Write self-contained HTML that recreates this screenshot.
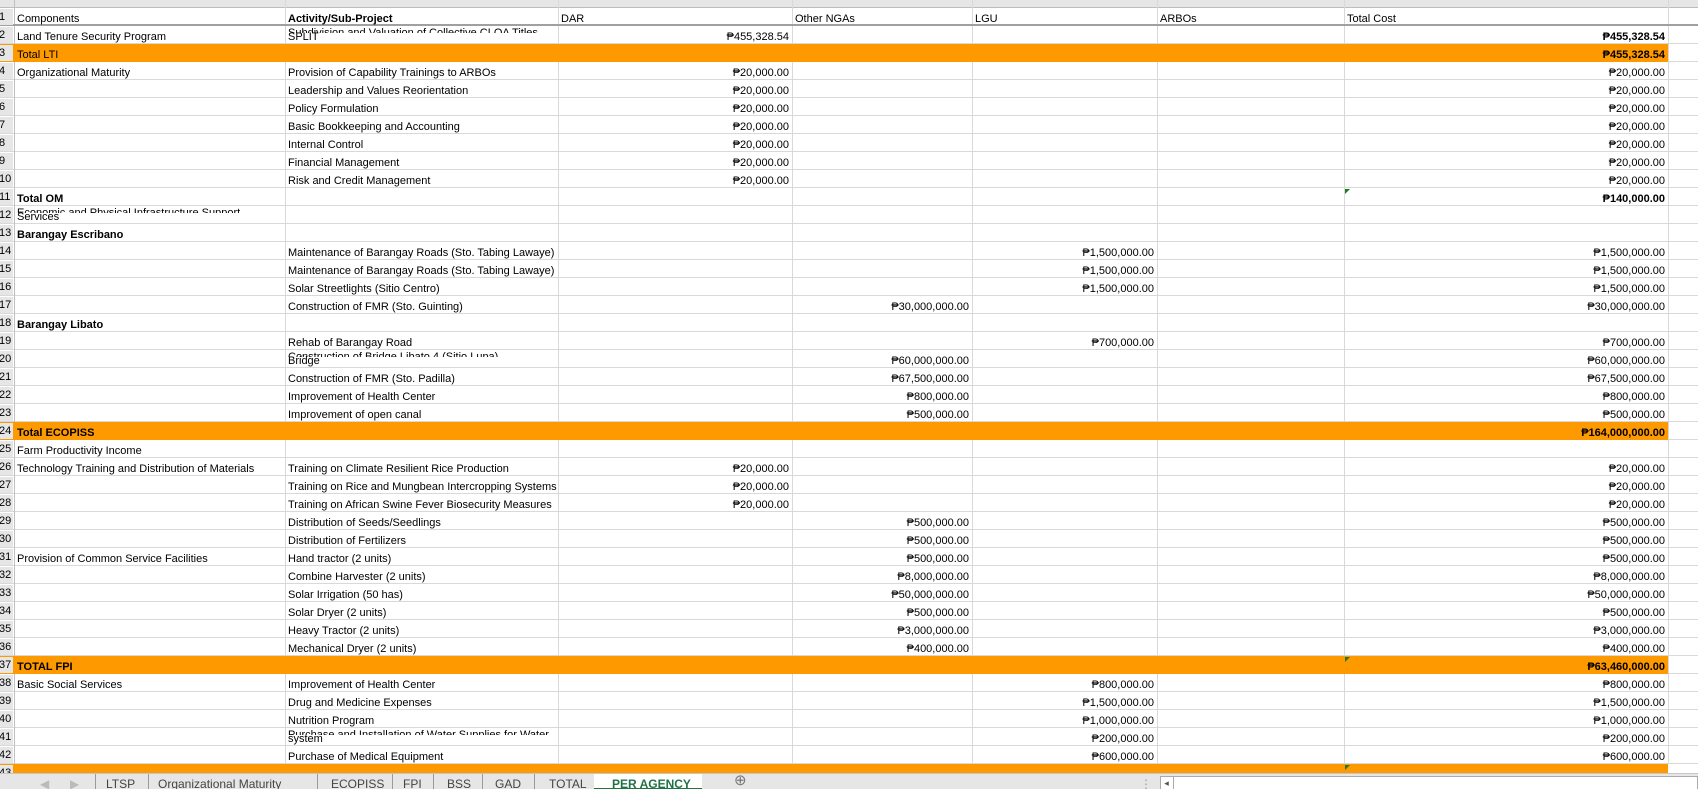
<!DOCTYPE html>
<html><head><meta charset="utf-8"><style>
*{margin:0;padding:0;box-sizing:border-box}
body{width:1698px;height:789px;overflow:hidden;background:#fff;font-family:"Liberation Sans",Arial,sans-serif;font-size:11px;color:#000;position:relative}
#grid{position:absolute;left:0;top:8px;width:1698px;height:756px;background:repeating-linear-gradient(to bottom,transparent 0,transparent 17px,#d9d9d9 17px,#d9d9d9 18px)}
.v{position:absolute;top:0;width:1px;height:764px;background:#d9d9d9}
.hdr{position:absolute;left:0;top:0;width:1698px;height:8px;background:#e6e6e6;border-bottom:1px solid #bdbdbd}
.r{position:absolute;left:0;width:1698px;height:18px;line-height:18px;white-space:nowrap}
.r>div{position:absolute;top:2px;overflow:visible}
.n{left:-1px;width:14px;background:#e6e6e6;overflow:hidden!important;height:16px;top:1px!important;line-height:17px}
.o{background:#ff9900;width:1668px}
.o .n{background:#e6e6e6}
.a{left:17px}.b{left:288px}
.c{left:558px;width:231px;text-align:right}
.d{left:792px;width:177px;text-align:right}
.e{left:972px;width:182px;text-align:right}
.g{left:1344px;width:321px;text-align:right}
.ch{left:561px}.dh{left:795px}.eh{left:975px}.fh{left:1160px}.gh{left:1347px}
.bo{font-weight:bold}
.clip{position:absolute;height:6px;overflow:hidden;line-height:12px;font-size:11px}
#tabs{position:absolute;left:0;top:773px;width:1698px;height:16px;background:#e6e6e6;border-top:1px solid #c6c6c6;overflow:hidden;font-size:12px;color:#444}
#tabs span{position:absolute;top:2px;line-height:16px}
#tabs i{position:absolute;top:0;width:1px;height:16px;background:#9a9a9a}
.tri{position:absolute;width:0;height:0;border-top:5px solid #1e7b1e;border-right:5px solid transparent}
</style></head><body>
<div class="hdr"></div>
<div id="grid"></div>
<div class="v" style="left:14px;background:#c0c0c0"></div>
<div class="v" style="left:285px"></div>
<div class="v" style="left:558px"></div>
<div class="v" style="left:792px"></div>
<div class="v" style="left:972px"></div>
<div class="v" style="left:1157px"></div>
<div class="v" style="left:1344px"></div>
<div class="v" style="left:1668px"></div>

<div class="r" style="top:8px;border-bottom:2px solid #a0a0a0"><div class="n">1</div><div class="a">Components</div><div class="b bo">Activity/Sub-Project</div><div class="ch">DAR</div><div class="dh">Other NGAs</div><div class="eh">LGU</div><div class="fh">ARBOs</div><div class="gh">Total Cost</div></div>
<div class="clip" style="left:288px;top:27px">Subdivision and Valuation of Collective CLOA Titles</div>
<div class="r" style="top:26px"><div class="n">2</div><div class="a">Land Tenure Security Program</div><div class="b">SPLIT</div><div class="c">₱455,328.54</div><div class="g bo">₱455,328.54</div></div>
<div class="r o" style="top:44px"><div class="n">3</div><div class="a">Total LTI</div><div class="g bo">₱455,328.54</div></div>
<div class="r" style="top:62px"><div class="n">4</div><div class="a">Organizational Maturity</div><div class="b">Provision of Capability Trainings to ARBOs</div><div class="c">₱20,000.00</div><div class="g">₱20,000.00</div></div>
<div class="r" style="top:80px"><div class="n">5</div><div class="b">Leadership and Values Reorientation</div><div class="c">₱20,000.00</div><div class="g">₱20,000.00</div></div>
<div class="r" style="top:98px"><div class="n">6</div><div class="b">Policy Formulation</div><div class="c">₱20,000.00</div><div class="g">₱20,000.00</div></div>
<div class="r" style="top:116px"><div class="n">7</div><div class="b">Basic Bookkeeping and Accounting</div><div class="c">₱20,000.00</div><div class="g">₱20,000.00</div></div>
<div class="r" style="top:134px"><div class="n">8</div><div class="b">Internal Control</div><div class="c">₱20,000.00</div><div class="g">₱20,000.00</div></div>
<div class="r" style="top:152px"><div class="n">9</div><div class="b">Financial Management</div><div class="c">₱20,000.00</div><div class="g">₱20,000.00</div></div>
<div class="r" style="top:170px"><div class="n">10</div><div class="b">Risk and Credit Management</div><div class="c">₱20,000.00</div><div class="g">₱20,000.00</div></div>
<div class="r" style="top:188px"><div class="n">11</div><div class="a bo">Total OM</div><div class="g bo">₱140,000.00</div></div>
<div class="clip" style="left:17px;top:207px">Economic and Physical Infrastructure Support</div>
<div class="r" style="top:206px"><div class="n">12</div><div class="a">Services</div></div>
<div class="r" style="top:224px"><div class="n">13</div><div class="a bo">Barangay Escribano</div></div>
<div class="r" style="top:242px"><div class="n">14</div><div class="b">Maintenance of Barangay Roads (Sto. Tabing Lawaye)</div><div class="e">₱1,500,000.00</div><div class="g">₱1,500,000.00</div></div>
<div class="r" style="top:260px"><div class="n">15</div><div class="b">Maintenance of Barangay Roads (Sto. Tabing Lawaye)</div><div class="e">₱1,500,000.00</div><div class="g">₱1,500,000.00</div></div>
<div class="r" style="top:278px"><div class="n">16</div><div class="b">Solar Streetlights (Sitio Centro)</div><div class="e">₱1,500,000.00</div><div class="g">₱1,500,000.00</div></div>
<div class="r" style="top:296px"><div class="n">17</div><div class="b">Construction of FMR (Sto. Guinting)</div><div class="d">₱30,000,000.00</div><div class="g">₱30,000,000.00</div></div>
<div class="r" style="top:314px"><div class="n">18</div><div class="a bo">Barangay Libato</div></div>
<div class="r" style="top:332px"><div class="n">19</div><div class="b">Rehab of Barangay Road</div><div class="e">₱700,000.00</div><div class="g">₱700,000.00</div></div>
<div class="clip" style="left:288px;top:351px">Construction of Bridge Libato 4 (Sitio Lupa)</div>
<div class="r" style="top:350px"><div class="n">20</div><div class="b">Bridge</div><div class="d">₱60,000,000.00</div><div class="g">₱60,000,000.00</div></div>
<div class="r" style="top:368px"><div class="n">21</div><div class="b">Construction of FMR (Sto. Padilla)</div><div class="d">₱67,500,000.00</div><div class="g">₱67,500,000.00</div></div>
<div class="r" style="top:386px"><div class="n">22</div><div class="b">Improvement of Health Center</div><div class="d">₱800,000.00</div><div class="g">₱800,000.00</div></div>
<div class="r" style="top:404px"><div class="n">23</div><div class="b">Improvement of open canal</div><div class="d">₱500,000.00</div><div class="g">₱500,000.00</div></div>
<div class="r o" style="top:422px"><div class="n">24</div><div class="a bo">Total ECOPISS</div><div class="g bo">₱164,000,000.00</div></div>
<div class="r" style="top:440px"><div class="n">25</div><div class="a">Farm Productivity Income</div></div>
<div class="r" style="top:458px"><div class="n">26</div><div class="a">Technology Training and Distribution of Materials</div><div class="b">Training on Climate Resilient Rice Production</div><div class="c">₱20,000.00</div><div class="g">₱20,000.00</div></div>
<div class="r" style="top:476px"><div class="n">27</div><div class="b">Training on Rice and Mungbean Intercropping Systems</div><div class="c">₱20,000.00</div><div class="g">₱20,000.00</div></div>
<div class="r" style="top:494px"><div class="n">28</div><div class="b">Training on African Swine Fever Biosecurity Measures</div><div class="c">₱20,000.00</div><div class="g">₱20,000.00</div></div>
<div class="r" style="top:512px"><div class="n">29</div><div class="b">Distribution of Seeds/Seedlings</div><div class="d">₱500,000.00</div><div class="g">₱500,000.00</div></div>
<div class="r" style="top:530px"><div class="n">30</div><div class="b">Distribution of Fertilizers</div><div class="d">₱500,000.00</div><div class="g">₱500,000.00</div></div>
<div class="r" style="top:548px"><div class="n">31</div><div class="a">Provision of Common Service Facilities</div><div class="b">Hand tractor (2 units)</div><div class="d">₱500,000.00</div><div class="g">₱500,000.00</div></div>
<div class="r" style="top:566px"><div class="n">32</div><div class="b">Combine Harvester (2 units)</div><div class="d">₱8,000,000.00</div><div class="g">₱8,000,000.00</div></div>
<div class="r" style="top:584px"><div class="n">33</div><div class="b">Solar Irrigation (50 has)</div><div class="d">₱50,000,000.00</div><div class="g">₱50,000,000.00</div></div>
<div class="r" style="top:602px"><div class="n">34</div><div class="b">Solar Dryer (2 units)</div><div class="d">₱500,000.00</div><div class="g">₱500,000.00</div></div>
<div class="r" style="top:620px"><div class="n">35</div><div class="b">Heavy Tractor (2 units)</div><div class="d">₱3,000,000.00</div><div class="g">₱3,000,000.00</div></div>
<div class="r" style="top:638px"><div class="n">36</div><div class="b">Mechanical Dryer (2 units)</div><div class="d">₱400,000.00</div><div class="g">₱400,000.00</div></div>
<div class="r o" style="top:656px"><div class="n">37</div><div class="a bo">TOTAL FPI</div><div class="g bo">₱63,460,000.00</div></div>
<div class="r" style="top:674px"><div class="n">38</div><div class="a">Basic Social Services</div><div class="b">Improvement of Health Center</div><div class="e">₱800,000.00</div><div class="g">₱800,000.00</div></div>
<div class="r" style="top:692px"><div class="n">39</div><div class="b">Drug and Medicine Expenses</div><div class="e">₱1,500,000.00</div><div class="g">₱1,500,000.00</div></div>
<div class="r" style="top:710px"><div class="n">40</div><div class="b">Nutrition Program</div><div class="e">₱1,000,000.00</div><div class="g">₱1,000,000.00</div></div>
<div class="clip" style="left:288px;top:729px">Purchase and Installation of Water Supplies for Water</div>
<div class="r" style="top:728px"><div class="n">41</div><div class="b">system</div><div class="e">₱200,000.00</div><div class="g">₱200,000.00</div></div>
<div class="r" style="top:746px"><div class="n">42</div><div class="b">Purchase of Medical Equipment</div><div class="e">₱600,000.00</div><div class="g">₱600,000.00</div></div>
<div class="r o" style="top:764px"><div class="n">43</div></div>
<div class="tri" style="left:1345px;top:189px"></div>
<div class="tri" style="left:1345px;top:657px"></div>
<div class="tri" style="left:1345px;top:765px"></div>

<div id="tabs">
<span style="left:40px;color:#bbb">◀</span><span style="left:70px;color:#bbb">▶</span>
<i style="left:95px"></i><span style="left:106px">LTSP</span>
<i style="left:148px"></i><span style="left:158px">Organizational Maturity</span>
<i style="left:317px"></i><span style="left:331px">ECOPISS</span>
<i style="left:392px"></i><span style="left:403px">FPI</span>
<i style="left:433px"></i><span style="left:447px">BSS</span>
<i style="left:482px"></i><span style="left:495px">GAD</span>
<i style="left:534px"></i><span style="left:549px">TOTAL</span>
<div style="position:absolute;left:594px;top:-1px;width:108px;height:17px;background:#fff;border-bottom:2px solid #217346"></div>
<span style="left:612px;color:#217346;font-weight:bold">PER AGENCY</span>
<span style="left:734px;color:#777;font-size:15px;top:-1px">⊕</span>
<span style="left:1140px;color:#999">⋮</span>
<div style="position:absolute;left:1160px;top:2px;width:538px;height:14px;background:#fff;border:1px solid #aaa"></div>
<div style="position:absolute;left:1160px;top:2px;width:14px;height:14px;border-right:1px solid #aaa;font-size:9px;line-height:14px;text-align:center;color:#555">◂</div>
</div>
</body></html>
